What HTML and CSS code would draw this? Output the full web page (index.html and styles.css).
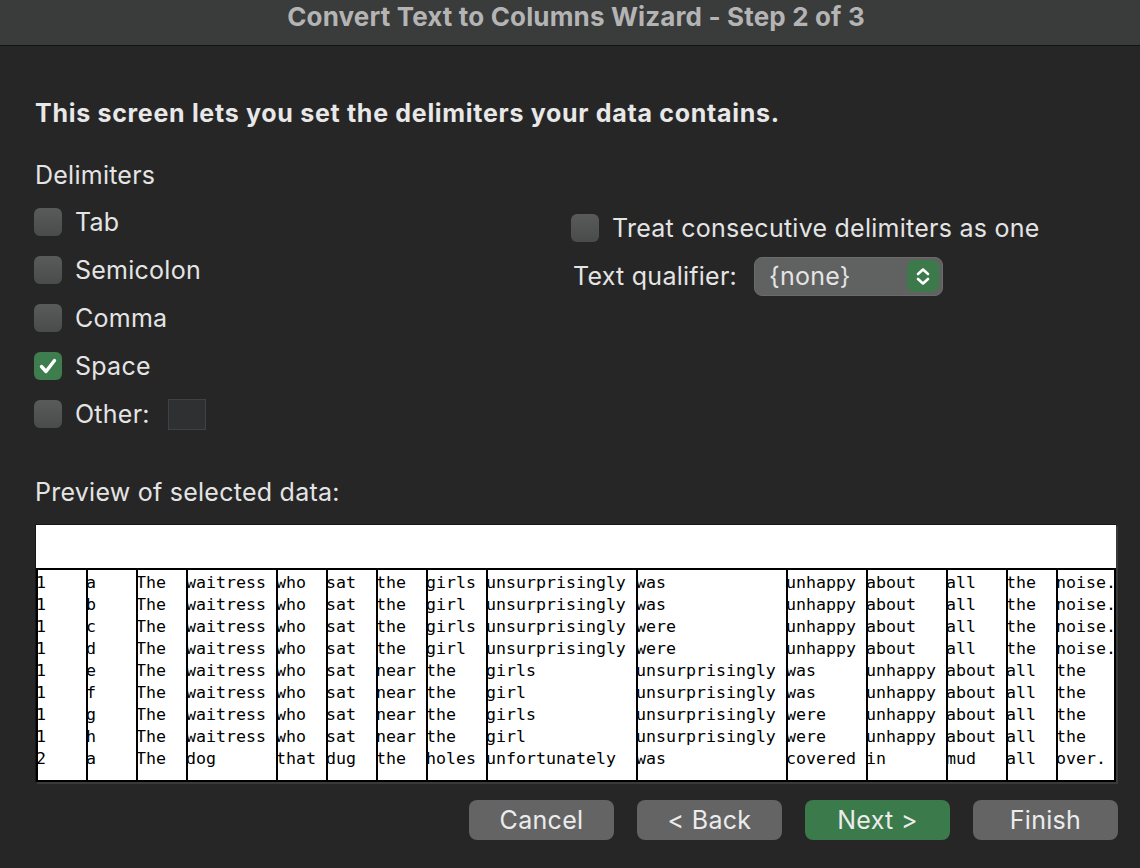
FILE: index.html
```html
<!DOCTYPE html>
<html lang="en">
<head>
<meta charset="utf-8">
<title>Convert Text to Columns Wizard - Step 2 of 3</title>
<link rel="stylesheet" href="styles.css">
</head>
<body>
<header class="titlebar">Convert Text to Columns Wizard - Step 2 of 3</header>
<main class="content">
  <h1 class="intro">This screen lets you set the delimiters your data contains.</h1>
  <div class="options">
    <section class="delims">
      <div class="group-label">Delimiters</div>
      <div class="check-list">
        <label class="check"><span class="box"></span>Tab</label>
        <label class="check"><span class="box"></span>Semicolon</label>
        <label class="check"><span class="box"></span>Comma</label>
        <label class="check"><span class="box on"><svg viewBox="0 0 28 28" width="28" height="28"><path d="M7.5 14.5 L12 19.5 L20.5 8.5" fill="none" stroke="#fff" stroke-width="3.4" stroke-linecap="round" stroke-linejoin="round"/></svg></span>Space</label>
        <label class="check"><span class="box"></span>Other:<span class="other-input"></span></label>
      </div>
    </section>
    <section class="settings">
      <label class="check"><span class="box"></span>Treat consecutive delimiters as one</label>
      <div class="qualifier-row">
        <span>Text qualifier:</span>
        <div class="select">
          <span>{none}</span>
          <span class="stepper"><svg viewBox="0 0 32 32" width="32" height="32"><path d="M11 14 L16 9.5 L21 14 M11 19 L16 23.5 L21 19" fill="none" stroke="#fff" stroke-width="2.6" stroke-linecap="round" stroke-linejoin="round"/></svg></span>
        </div>
      </div>
    </section>
  </div>
  <div class="preview-label">Preview of selected data:</div>
  <div class="preview">
    <div class="preview-head"></div>
    <div class="grid">
      <div class="col c5"><div>1</div><div>1</div><div>1</div><div>1</div><div>1</div><div>1</div><div>1</div><div>1</div><div>2</div></div>
      <div class="col c5"><div>a</div><div>b</div><div>c</div><div>d</div><div>e</div><div>f</div><div>g</div><div>h</div><div>a</div></div>
      <div class="col c5"><div>The</div><div>The</div><div>The</div><div>The</div><div>The</div><div>The</div><div>The</div><div>The</div><div>The</div></div>
      <div class="col c9"><div>waitress</div><div>waitress</div><div>waitress</div><div>waitress</div><div>waitress</div><div>waitress</div><div>waitress</div><div>waitress</div><div>dog</div></div>
      <div class="col c5"><div>who</div><div>who</div><div>who</div><div>who</div><div>who</div><div>who</div><div>who</div><div>who</div><div>that</div></div>
      <div class="col c5"><div>sat</div><div>sat</div><div>sat</div><div>sat</div><div>sat</div><div>sat</div><div>sat</div><div>sat</div><div>dug</div></div>
      <div class="col c5"><div>the</div><div>the</div><div>the</div><div>the</div><div>near</div><div>near</div><div>near</div><div>near</div><div>the</div></div>
      <div class="col c6"><div>girls</div><div>girl</div><div>girls</div><div>girl</div><div>the</div><div>the</div><div>the</div><div>the</div><div>holes</div></div>
      <div class="col c15"><div>unsurprisingly</div><div>unsurprisingly</div><div>unsurprisingly</div><div>unsurprisingly</div><div>girls</div><div>girl</div><div>girls</div><div>girl</div><div>unfortunately</div></div>
      <div class="col c15"><div>was</div><div>was</div><div>were</div><div>were</div><div>unsurprisingly</div><div>unsurprisingly</div><div>unsurprisingly</div><div>unsurprisingly</div><div>was</div></div>
      <div class="col c8"><div>unhappy</div><div>unhappy</div><div>unhappy</div><div>unhappy</div><div>was</div><div>was</div><div>were</div><div>were</div><div>covered</div></div>
      <div class="col c8"><div>about</div><div>about</div><div>about</div><div>about</div><div>unhappy</div><div>unhappy</div><div>unhappy</div><div>unhappy</div><div>in</div></div>
      <div class="col c6"><div>all</div><div>all</div><div>all</div><div>all</div><div>about</div><div>about</div><div>about</div><div>about</div><div>mud</div></div>
      <div class="col c5"><div>the</div><div>the</div><div>the</div><div>the</div><div>all</div><div>all</div><div>all</div><div>all</div><div>all</div></div>
      <div class="col last"><div>noise.</div><div>noise.</div><div>noise.</div><div>noise.</div><div>the</div><div>the</div><div>the</div><div>the</div><div>over.</div></div>
    </div>
  </div>
  <div class="actions">
    <button class="btn">Cancel</button>
    <button class="btn">&lt; Back</button>
    <button class="btn primary">Next &gt;</button>
    <button class="btn">Finish</button>
  </div>
</main>
</body>
</html>
```

FILE: styles.css
```css
* {
  box-sizing: border-box;
  margin: 0;
  padding: 0;
}

html, body {
  background: #262626;
}

body {
  width: 1140px;
  height: 868px;
  overflow: hidden;
  font-family: Inter, "Liberation Sans", sans-serif;
  color: #e4e4e4;
  font-size: 25px;
  letter-spacing: 0.25px;
}

.titlebar {
  height: 46px;
  padding-left: 12px;
  background: #3a3b3b;
  border-bottom: 1px solid #141414;
  text-align: center;
  font-weight: 700;
  font-size: 26px;
  letter-spacing: 0.15px;
  line-height: 34px;
  color: #b4b4b4;
}

.content {
  padding: 0 22px 0 35px;
}

.intro {
  margin-top: 52px;
  font-size: 25px;
  letter-spacing: 0.7px;
  line-height: 30px;
  font-weight: 700;
  color: #e8e8e8;
}

.options {
  display: grid;
  grid-template-columns: 537px 1fr;
  margin-top: 32px;
}

.group-label {
  line-height: 30px;
}

.check-list {
  margin-top: 8px;
}

.check {
  display: flex;
  align-items: center;
  height: 48px;
  line-height: 30px;
}

.box {
  width: 28px;
  height: 28px;
  flex: none;
  border-radius: 6px;
  margin-left: -1px;
  margin-right: 13px;
  background: linear-gradient(#595a5a, #4a4b4b);
  display: flex;
}

.box.on {
  background: #3e7d4e;
}

.other-input {
  width: 38px;
  height: 31px;
  margin-left: 18px;
  background: #2f3031;
  border: 1px solid #404141;
}

.settings {
  margin-top: 44px;
}

.qualifier-row {
  display: flex;
  align-items: center;
  gap: 17px;
  height: 48px;
  padding-left: 1px;
}

.select {
  width: 189px;
  height: 39px;
  border-radius: 8px;
  background: #606161;
  border: 1px solid #6b6b6b;
  display: flex;
  align-items: center;
  justify-content: space-between;
  padding-left: 14px;
  padding-right: 3px;
  line-height: 30px;
}

.stepper {
  width: 32px;
  height: 32px;
  border-radius: 7px;
  background: #3d7a4b;
  display: flex;
}

.preview-label {
  margin-top: 39px;
  line-height: 30px;
}

.preview {
  margin-top: 17px;
  width: 1081px;
  background: #fff;
  border-left: 1px solid #161616;
  border-top: 1px solid #161616;
  box-shadow: 2px 2px 0 #3a3a3a;
}

.preview-head {
  height: 43px;
}

.grid {
  display: flex;
  border-top: 2px solid #000;
  border-right: 2px solid #000;
  border-bottom: 2px solid #000;
  font-family: "DejaVu Sans Mono", "Liberation Mono", monospace;
  font-size: 16.6px;
  letter-spacing: 0;
  line-height: 22px;
  color: #000;
}

.col {
  padding: 2px 0 10px;
  box-shadow: inset 2px 0 #000;
  white-space: pre;
  overflow: hidden;
  flex: none;
}

.c5 { width: 50px; }
.c6 { width: 60px; }
.c8 { width: 80px; }
.c9 { width: 90px; }
.c15 { width: 150px; }

.col.last {
  flex: 1;
  overflow: visible;
}

.actions {
  display: flex;
  justify-content: flex-end;
  gap: 23px;
  margin-top: 18px;
}

.btn {
  width: 145px;
  height: 40px;
  border: none;
  border-radius: 8px;
  background: #646464;
  color: #ececec;
  font-family: Inter, "Liberation Sans", sans-serif;
  font-size: 25px;
  letter-spacing: 0.3px;
}

.btn.primary {
  background: #3b7a4b;
}
```
